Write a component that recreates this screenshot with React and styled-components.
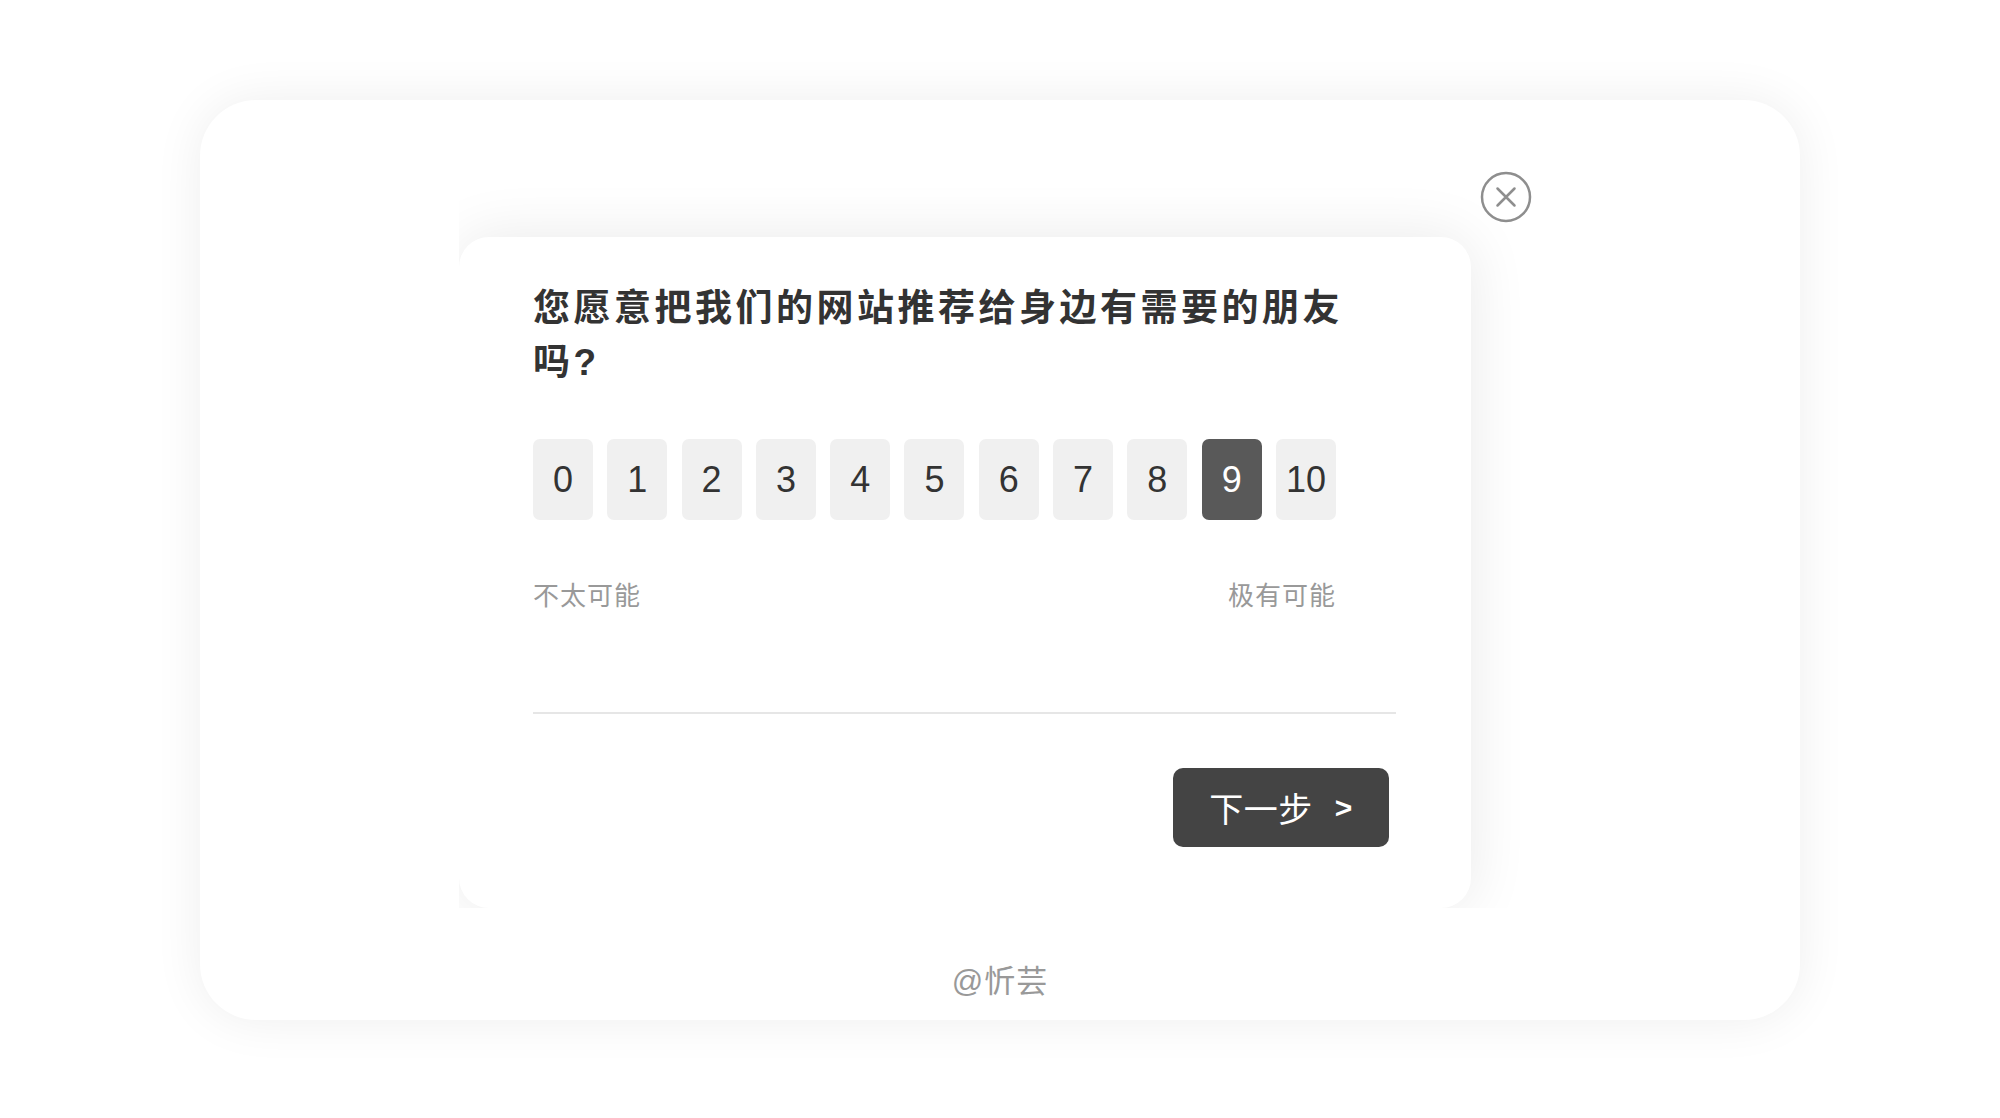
import styled, { createGlobalStyle } from 'styled-components';

const GlobalStyle = createGlobalStyle`
  body {
    margin: 0;
    background: #ffffff;
    font-family: "Liberation Sans", "Noto Sans CJK SC", sans-serif;
  }
`;

const Page = styled.div`
  padding-top: 100px;
  min-height: 1118px;
  box-sizing: border-box;
`;

const Card = styled.div`
  width: 1600px;
  height: 920px;
  margin: 0 auto;
  box-sizing: border-box;
  padding-top: 60px;
  border-radius: 56px;
  background: #fff;
  box-shadow: 0 0 50px rgba(0, 0, 0, 0.07);
  display: flex;
  flex-direction: column;
  align-items: center;
`;

const Frame = styled.div`
  position: relative;
  width: 1082px;
  height: 748px;
  box-sizing: border-box;
  padding: 77px 70px 0 0;
  overflow: hidden;
`;

const CloseButton = styled.button`
  position: absolute;
  top: 11px;
  right: 9px;
  width: 52px;
  height: 52px;
  padding: 0;
  border: none;
  background: transparent;
  cursor: pointer;
  svg {
    display: block;
  }
`;

const Dialog = styled.div`
  width: 1012px;
  height: 671px;
  box-sizing: border-box;
  padding: 45px 75px 60px 74px;
  border-radius: 30px;
  background: #fff;
  box-shadow: 0 0 60px rgba(0, 0, 0, 0.09);
  display: flex;
  flex-direction: column;
`;

const Title = styled.h2`
  margin: 0;
  max-width: 830px;
  font-size: 37px;
  font-weight: 700;
  line-height: 54px;
  letter-spacing: 3.5px;
  color: #333;
`;

const Scale = styled.div`
  align-self: flex-start;
  margin-top: 49px;
`;

const ScoreRow = styled.div`
  display: flex;
  gap: 14.3px;
`;

const Score = styled.button`
  width: 60px;
  height: 81px;
  padding: 0;
  border: none;
  border-radius: 7px;
  background: ${(p) => (p.$active ? '#595959' : '#f0f0f0')};
  color: ${(p) => (p.$active ? '#fff' : '#333')};
  font-family: "Liberation Sans", sans-serif;
  font-size: 36px;
  cursor: pointer;
`;

const Labels = styled.div`
  margin-top: 58px;
  display: flex;
  justify-content: space-between;
  font-size: 26px;
  line-height: 36px;
  letter-spacing: 1px;
  color: #999;
`;

const Divider = styled.div`
  margin-top: 98px;
  height: 2px;
  background: #e6e6e6;
`;

const Actions = styled.div`
  margin-top: 54px;
  padding-right: 7px;
  display: flex;
  justify-content: flex-end;
`;

const NextButton = styled.button`
  width: 216px;
  height: 79px;
  border: none;
  border-radius: 10px;
  background: #444;
  color: #fff;
  font-family: "Liberation Sans", "Noto Sans CJK SC", sans-serif;
  font-size: 34px;
  letter-spacing: 0.5px;
  display: flex;
  align-items: center;
  justify-content: center;
  gap: 22px;
  cursor: pointer;
  b {
    font-size: 30px;
    font-weight: 700;
  }
`;

const Signature = styled.div`
  margin-top: 54px;
  font-size: 31px;
  line-height: 40px;
  letter-spacing: 1px;
  color: #999;
`;

const scores = [0, 1, 2, 3, 4, 5, 6, 7, 8, 9, 10];

const CloseIcon = () => (
  <svg width="52" height="52" viewBox="0 0 52 52" fill="none">
    <circle cx="26" cy="26" r="24" stroke="#8e8e8e" strokeWidth="2.5" />
    <path d="M17.5 17.5 L34.5 34.5 M34.5 17.5 L17.5 34.5" stroke="#8e8e8e" strokeWidth="2.5" strokeLinecap="round" />
  </svg>
);

const App = () => {
  const selected = 9;
  return (
    <>
      <GlobalStyle />
      <Page>
        <Card>
          <Frame>
            <CloseButton aria-label="关闭">
              <CloseIcon />
            </CloseButton>
            <Dialog>
              <Title>您愿意把我们的网站推荐给身边有需要的朋友吗?</Title>
              <Scale>
                <ScoreRow>
                  {scores.map((n) => (
                    <Score key={n} $active={n === selected}>
                      {n}
                    </Score>
                  ))}
                </ScoreRow>
                <Labels>
                  <span>不太可能</span>
                  <span>极有可能</span>
                </Labels>
              </Scale>
              <Divider />
              <Actions>
                <NextButton>
                  <span>下一步</span>
                  <b>&gt;</b>
                </NextButton>
              </Actions>
            </Dialog>
          </Frame>
          <Signature>@忻芸</Signature>
        </Card>
      </Page>
    </>
  );
};

export default App;
